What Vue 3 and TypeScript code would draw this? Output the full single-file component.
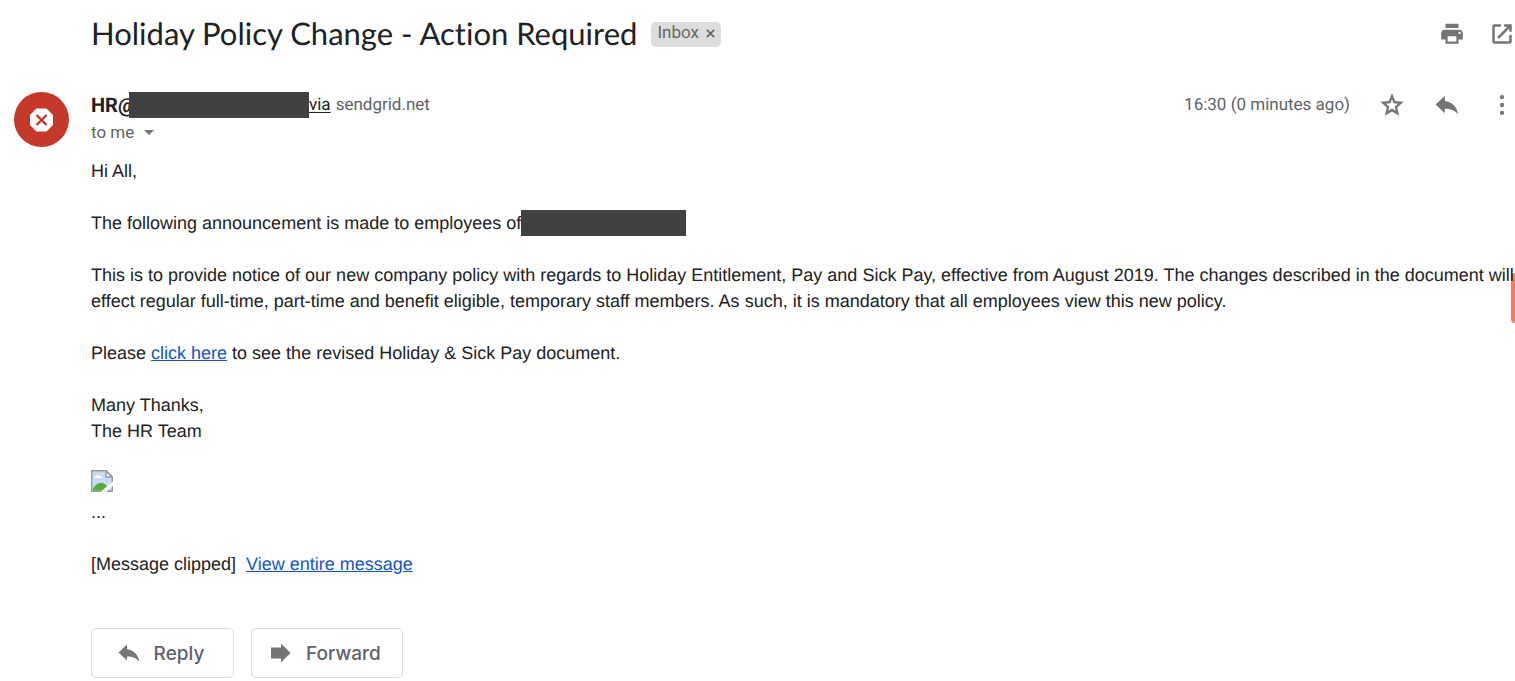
<script setup lang="ts">
interface Action {
  label: string
  paths: string[]
}

const threadActions: Action[] = [
  {
    label: 'Print all',
    paths: ['M19 8H5c-1.660 0-3 1.340-3 3v6h4v4h12v-4h4v-6c0-1.660-1.340-3-3-3zm-3 11H8v-5h8v5zm3-7c-.55 0-1-.45-1-1s.45-1 1-1 1 .45 1 1-.45 1-1 1zM18 2.500H6V6.500h12z'],
  },
  {
    label: 'In new window',
    paths: ['M18.700 18.700H5.300V5.300H11V3H5a2 2 0 0 0-2 2v14a2 2 0 0 0 2 2h14c1.100 0 2-.9 2-2v-6h-2.300zM14 3v2.300h3l-9.500 9.500 1.700 1.700 9.500-9.500V10H21V3z'],
  },
]

const replyPath = 'M1.500 11.500 10 3.500v4.800c7 1 11 5.200 12.500 12.700-3.500-4.300-7-5.500-12.500-5.500v4z'

const messageActions: Action[] = [
  {
    label: 'Star',
    paths: ['M22.800 9l-7.900-.7L12 1 9.100 8.300 1.200 9l6 5.200L5.400 22 12 17.900l6.600 4.100-1.800-7.800zM12 15.200l-3.400 2.100.9-3.900-3-2.600 4-.4L12 6.700l1.500 3.700 4 .4-3 2.600.9 3.900z'],
  },
  { label: 'Reply', paths: [replyPath] },
  {
    label: 'More',
    paths: ['M12 2.800a2 2 0 1 0 0 4 2 2 0 0 0 0-4zM12 10a2 2 0 1 0 0 4 2 2 0 0 0 0-4zM12 17.200a2 2 0 1 0 0 4 2 2 0 0 0 0-4z'],
  },
]

const replies: Action[] = [
  { label: 'Reply', paths: [replyPath] },
  { label: 'Forward', paths: ['M2 6.500h10V2.500L21.500 12 12 21.500v-4H2z'] },
]
</script>

<template>
  <main class="thread">
    <header class="subject-row">
      <h1>Holiday Policy Change - Action Required</h1>
      <span class="label">
        Inbox
        <button type="button" class="remove" aria-label="Remove label Inbox">
          <svg viewBox="0 0 10 10"><path d="M1 1l8 8M9 1l-8 8" /></svg>
        </button>
      </span>
      <div class="thread-actions">
        <button v-for="a in threadActions" :key="a.label" type="button" class="icon" :aria-label="a.label">
          <svg viewBox="0 0 24 24"><path v-for="p in a.paths" :key="p" :d="p" /></svg>
        </button>
      </div>
    </header>

    <article class="message">
      <svg class="avatar" viewBox="0 0 55 55" aria-hidden="true">
        <circle cx="27.500" cy="27.500" r="27.500" fill="#c5392a" />
        <path d="M22.500 16.500h10l6.500 6.500v10l-6.500 6.500h-10L16 33V23z" fill="#fff" />
        <path d="M22.500 23l10 10M32.500 23l-10 10" stroke="#c5392a" stroke-width="2.400" />
      </svg>

      <div class="content">
        <div class="meta">
          <div class="sender">
            <strong>HR@</strong><span class="redacted name"></span><a href="#" class="via">via</a>
            <span class="domain">sendgrid.net</span>
          </div>
          <time>16:30 (0 minutes ago)</time>
          <div class="message-actions">
            <button v-for="a in messageActions" :key="a.label" type="button" class="icon" :aria-label="a.label">
              <svg viewBox="0 0 24 24"><path v-for="p in a.paths" :key="p" :d="p" /></svg>
            </button>
          </div>
        </div>
        <button type="button" class="recipients">
          to me
          <svg viewBox="0 0 10 5"><path d="M0 0h10L5 5z" /></svg>
        </button>

        <div class="body">
          <p>Hi All,</p>
          <p class="company">The following announcement is made to employees of<span class="redacted firm"></span></p>
          <p>
            This is to provide notice of our new company policy with regards to Holiday Entitlement, Pay and Sick Pay,
            effective from August 2019. The changes described in the document will effect regular full-time, part-time
            and benefit eligible, temporary staff members. As such, it is mandatory that all employees view this new
            policy.
          </p>
          <p>Please <a href="#">click here</a> to see the revised Holiday &amp; Sick Pay document.</p>
          <p>Many Thanks,<br />The HR Team</p>
          <svg class="broken" viewBox="0 0 22 22" role="img" aria-label="Missing image">
            <path d="M.7.7h14.600l6 6v14.600H.7z" fill="#c9daf8" stroke="#9a9a9a" stroke-width="1.400" />
            <path d="M1.400 20.600c1.600-5 5-7.600 8.600-7.600s6.500 2.600 8 7.600z" fill="#57ab3c" />
            <path d="M3 8c0-1.500 1-2 2-2 .5-2 3.500-2 4 0 1.500 0 2 1 2 2z" fill="#fff" />
            <path d="M15 1v6h6z" fill="#fff" stroke="#9a9a9a" stroke-width="1.400" />
            <path d="M9.500 22L22 11.500v4L15 22z" fill="#fff" />
          </svg>
          <div class="ellipsis">...</div>
          <div class="clipped">[Message clipped]&nbsp; <a href="#">View entire message</a></div>
        </div>

        <div class="replies">
          <button v-for="a in replies" :key="a.label" type="button" class="reply">
            <svg viewBox="0 0 24 24"><path v-for="p in a.paths" :key="p" :d="p" /></svg>
            {{ a.label }}
          </button>
        </div>
      </div>
    </article>
    <button type="button" class="side-tab" aria-label="Open side panel"></button>
  </main>
</template>

<style>
body {
  margin: 0;
  background: #fff;
}
</style>

<style scoped>
.thread {
  position: relative;
  overflow: hidden;
  color: #202124;
  font-family: Roboto, "Liberation Sans", sans-serif;
  text-rendering: geometricPrecision;
}

button {
  padding: 0;
  border: 0;
  background: none;
  color: inherit;
  font: inherit;
  cursor: pointer;
}

svg {
  display: block;
  flex: none;
}

.subject-row {
  display: flex;
  align-items: center;
  height: 68px;
  padding-left: 91px;
}

h1 {
  margin: 0;
  padding-bottom: 2px;
  font-family: Lato, sans-serif;
  font-size: 31px;
  line-height: 40px;
  font-weight: 400;
  font-variant-ligatures: none;
}

.label {
  display: flex;
  align-items: center;
  gap: 7px;
  box-sizing: border-box;
  height: 25px;
  margin-left: 14px;
  padding: 0 6px 2px;
  border-radius: 5px;
  background: #ddd;
  color: #666;
  font-size: 17px;
}

.remove svg {
  width: 9px;
  height: 9px;
  fill: none;
  stroke: #666;
  stroke-width: 2;
}

.icon svg {
  width: 26px;
  height: 26px;
  fill: #757575;
}

.thread-actions {
  display: flex;
  gap: 24px;
  margin-left: auto;
}

.message {
  position: relative;
  z-index: 1;
  display: flex;
  align-items: flex-start;
  padding: 24px 0 0 14px;
}

.avatar {
  width: 55px;
  height: 55px;
}

.content {
  flex: 1;
  min-width: 0;
  margin-left: 22px;
}

.meta {
  display: flex;
  align-items: center;
  height: 26px;
  font-size: 17px;
  color: #5f6368;
}

.sender {
  display: flex;
  align-items: center;
  flex: 1;
}

.sender strong {
  width: 38px;
  color: #202124;
  font-size: 20px;
}

.redacted {
  height: 26px;
  background: #414143;
}

.name {
  position: relative;
  width: 180px;
}

.via {
  color: #202124;
  text-underline-offset: 2px;
}

.domain {
  margin-left: 5px;
}

.message-actions {
  display: flex;
  gap: 29px;
  margin-left: 29px;
}

.recipients {
  display: flex;
  align-items: center;
  gap: 10px;
  height: 28px;
  font-size: 17px;
  color: #5f6368;
}

.recipients svg {
  width: 10px;
  height: 5px;
  fill: #757575;
}

.body {
  margin-top: 12px;
  font: 18px/26px "Liberation Sans", Arial, sans-serif;
  color: #222;
}

.body p {
  margin: 0 0 26px;
}

.body a {
  color: #15c;
}

.company {
  display: flex;
}

.firm {
  width: 165px;
}

.broken {
  width: 22px;
  height: 22px;
}

.ellipsis {
  margin-top: 7px;
}

.clipped {
  margin-top: 26px;
}

.replies {
  display: flex;
  gap: 17px;
  margin-top: 51px;
}

.reply {
  display: flex;
  align-items: center;
  justify-content: center;
  gap: 13px;
  box-sizing: border-box;
  min-width: 143px;
  height: 50px;
  padding: 0 21px 0 17px;
  border: 1px solid #dadce0;
  border-radius: 5px;
  color: #5f6368;
  font-family: Inter, "Open Sans", sans-serif;
  font-size: 19px;
  font-weight: 500;
}

.reply svg {
  width: 24px;
  height: 24px;
  fill: #757575;
}

.side-tab {
  position: absolute;
  top: 273px;
  right: 0;
  width: 4px;
  height: 50px;
  border-radius: 4px 0 0 4px;
  background: #ff7a59;
}
</style>
